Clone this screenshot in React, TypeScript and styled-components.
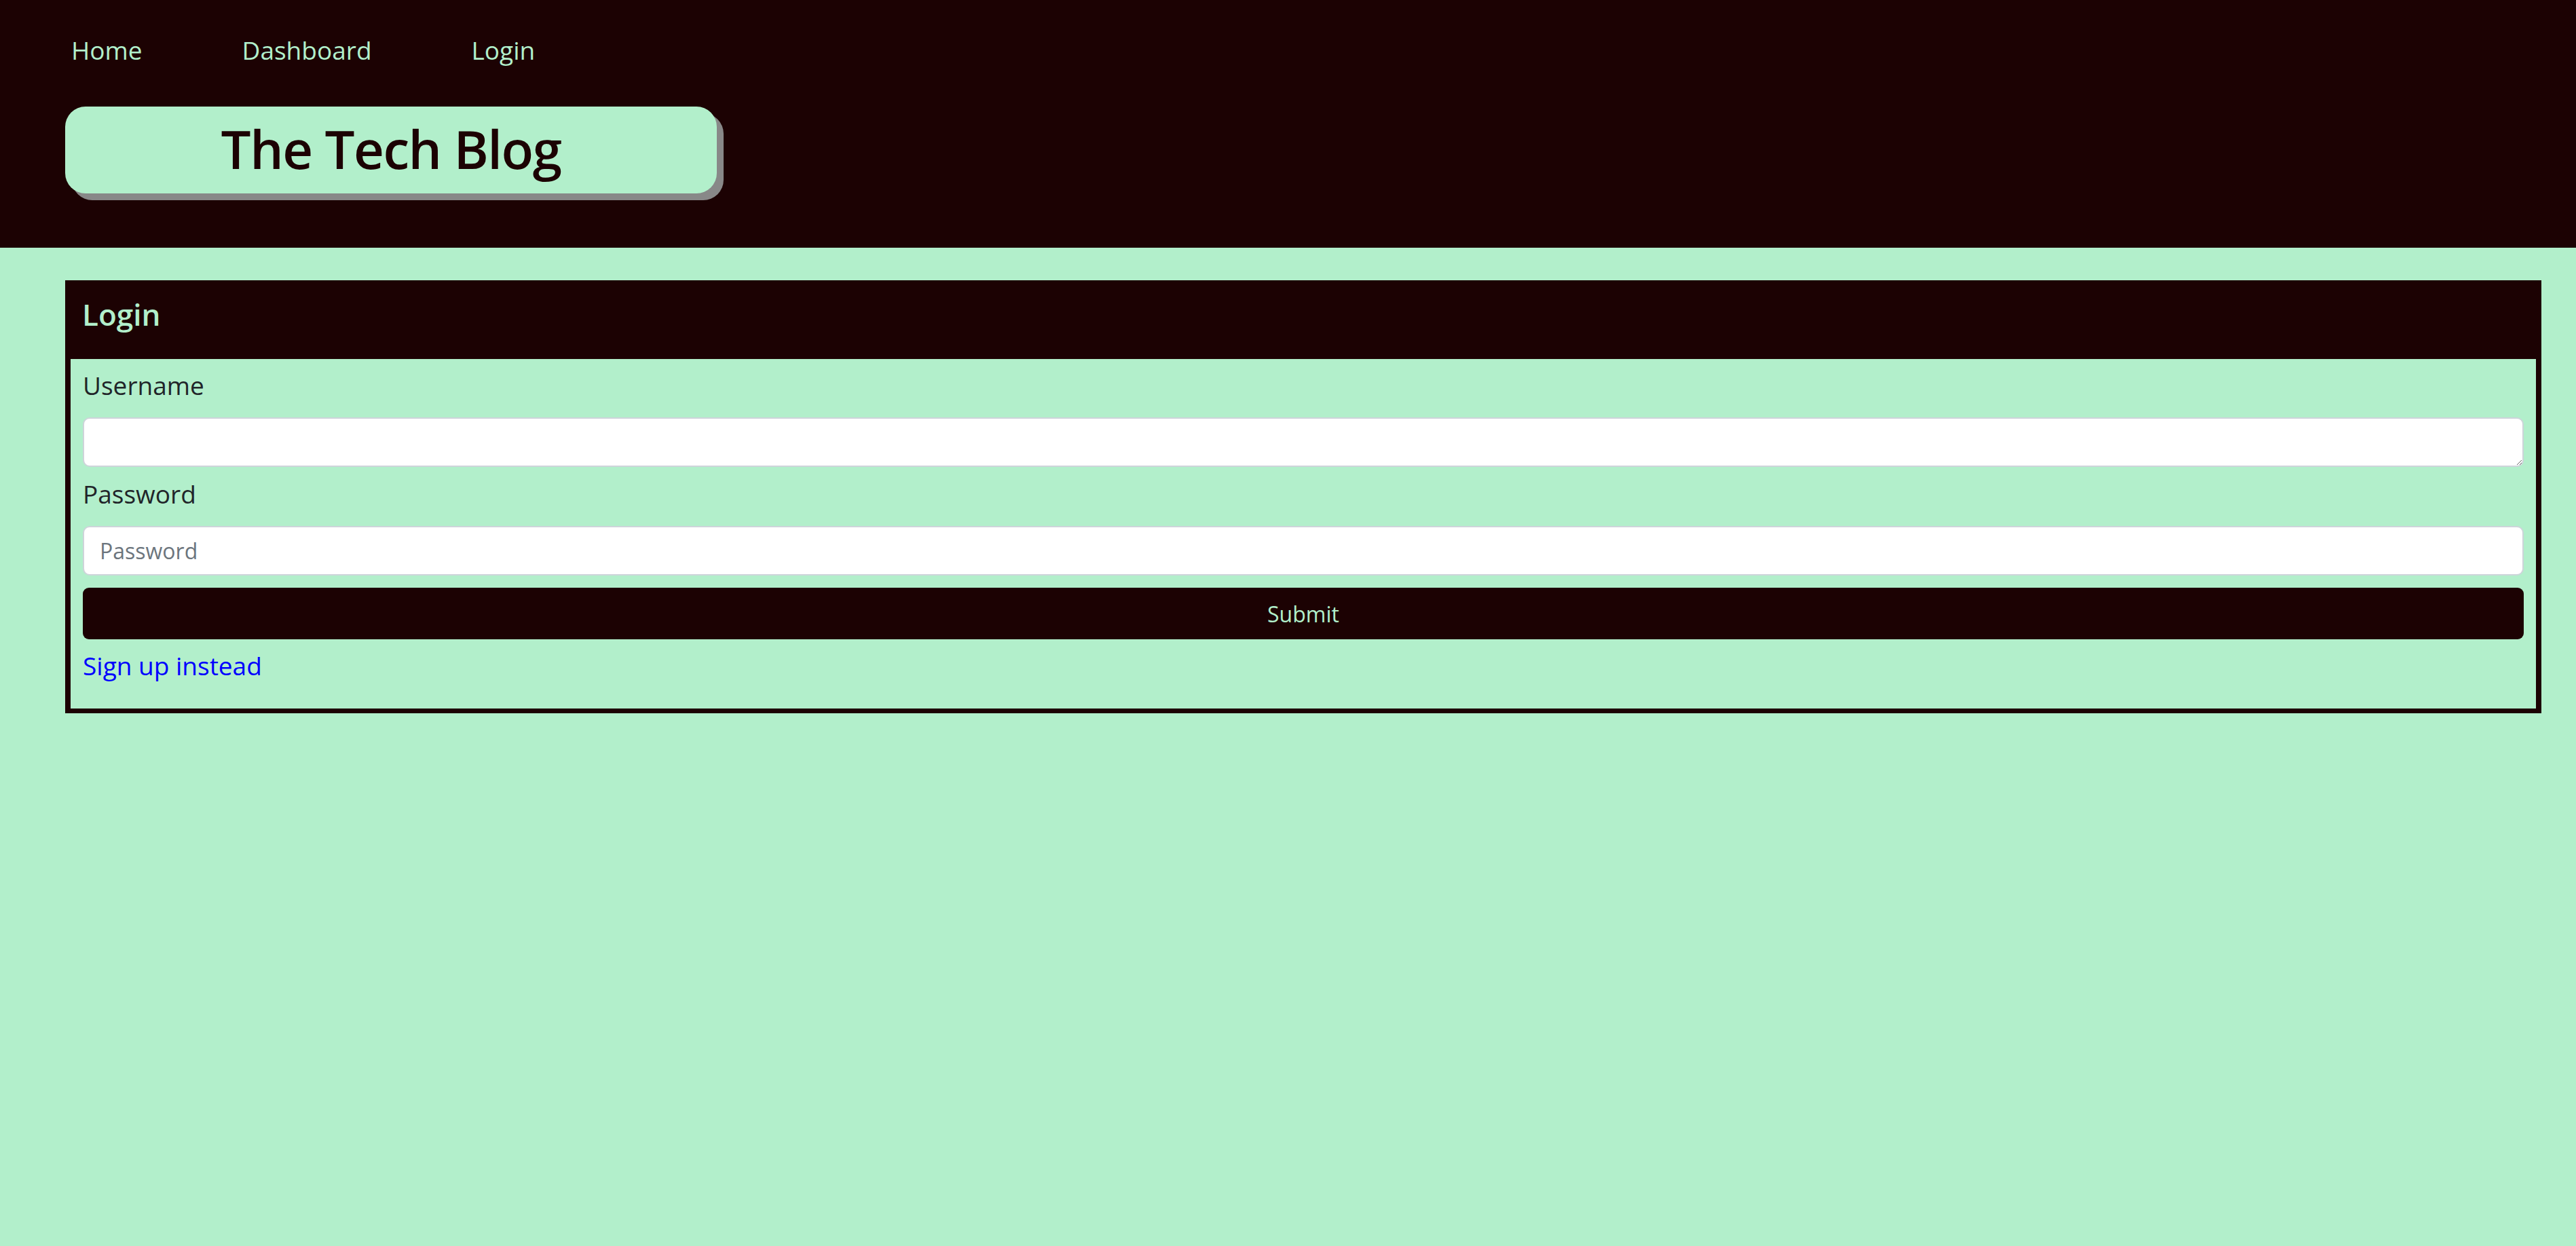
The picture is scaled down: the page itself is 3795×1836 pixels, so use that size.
import styled, { createGlobalStyle } from 'styled-components'

const dark = '#1c0203'
const mint = '#b2efcb'

const GlobalStyle = createGlobalStyle`
  body {
    margin: 0;
    background: ${mint};
    font-family: 'Open Sans', 'Noto Sans', sans-serif;
    color: #212529;
  }
`

const Page = styled.div`
  min-height: 100vh;
  background: ${mint};
`

const Header = styled.header`
  height: 365px;
  box-sizing: border-box;
  background: ${dark};
  padding: 46px 0 0 96px;
`

const Nav = styled.nav`
  display: flex;
  gap: 147px;
  padding-left: 9px;
`

const NavLink = styled.a`
  color: ${mint};
  font-size: 37px;
  line-height: 56px;
  text-decoration: none;
`

const TitleBox = styled.div`
  margin-top: 55px;
  width: 960px;
  height: 128px;
  display: flex;
  align-items: center;
  justify-content: center;
  background: ${mint};
  border-radius: 30px;
  box-shadow: 10px 10px 0 #888888;
`

const Title = styled.h1`
  margin: 0 0 4px;
  font-size: 78px;
  font-weight: 600;
  letter-spacing: -1.5px;
  color: ${dark};
`

const Main = styled.main`
  padding: 48px 51px 0 96px;
`

const Card = styled.section`
  border: 8px solid ${dark};
  border-bottom-width: 7px;
`

const CardHeader = styled.div`
  height: 109px;
  box-sizing: border-box;
  background: ${dark};
  padding: 17px 18px 0;
  margin: -1px -1px 0;
`

const CardTitle = styled.h2`
  margin: 0;
  font-size: 44px;
  font-weight: 600;
  line-height: 1.2;
  color: ${mint};
`

const Form = styled.form`
  display: flex;
  flex-direction: column;
  padding: 9px 18px 33px;
`

const Label = styled.label<{ $top?: number }>`
  display: block;
  font-size: 37px;
  line-height: 60px;
  margin-top: ${(p) => p.$top ?? 0}px;
  margin-bottom: 17px;
`

const TextArea = styled.textarea`
  display: block;
  box-sizing: border-box;
  width: 100%;
  height: 73px;
  border: 2px solid #ced4da;
  border-radius: 10px;
  background: #ffffff;
  font-family: inherit;
  font-size: 33px;
  padding: 8px 24px;
`

const Input = styled.input`
  display: block;
  box-sizing: border-box;
  width: 100%;
  height: 73px;
  border: 2px solid #ced4da;
  border-radius: 10px;
  background: #ffffff;
  font-family: inherit;
  font-size: 32px;
  padding: 0 23px;

  &::placeholder {
    color: #6c757d;
  }
`

const SubmitButton = styled.button`
  margin-top: 18px;
  height: 76px;
  border: none;
  border-radius: 9px;
  background: ${dark};
  color: ${mint};
  font-family: inherit;
  font-size: 32px;
  cursor: pointer;
`

const SignUpLink = styled.a`
  margin-top: 9px;
  font-size: 37px;
  line-height: 60px;
  color: #0000ff;
  text-decoration: none;
`

export default function App() {
  return (
    <Page>
      <GlobalStyle />
      <Header>
        <Nav>
          <NavLink href="#">Home</NavLink>
          <NavLink href="#">Dashboard</NavLink>
          <NavLink href="#">Login</NavLink>
        </Nav>
        <TitleBox>
          <Title>The Tech Blog</Title>
        </TitleBox>
      </Header>
      <Main>
        <Card>
          <CardHeader>
            <CardTitle>Login</CardTitle>
          </CardHeader>
          <Form onSubmit={(e) => e.preventDefault()}>
            <Label htmlFor="username">Username</Label>
            <TextArea id="username" />
            <Label htmlFor="password" $top={10}>
              Password
            </Label>
            <Input id="password" type="password" placeholder="Password" />
            <SubmitButton type="submit">Submit</SubmitButton>
            <SignUpLink href="#">Sign up instead</SignUpLink>
          </Form>
        </Card>
      </Main>
    </Page>
  )
}
